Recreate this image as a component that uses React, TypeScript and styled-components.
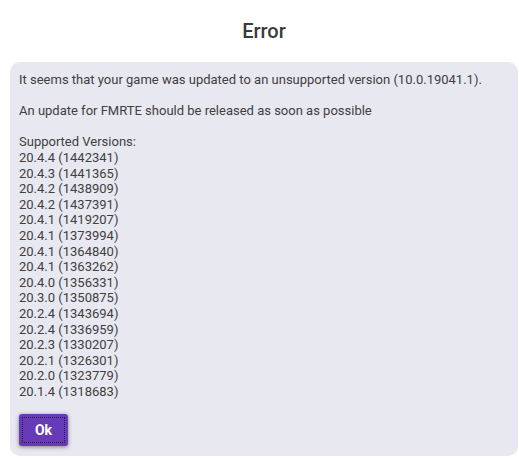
import React from "react";
import styled, { createGlobalStyle } from "styled-components";

const Global = createGlobalStyle`
  html, body { margin: 0; padding: 0; background: #ffffff; }
  body { font-family: Roboto, "Liberation Sans", sans-serif; }
`;

const Page = styled.div`
  display: flex;
  flex-direction: column;
  padding: 0 1px 4px 10px;
  width: 519px;
  box-sizing: border-box;
`;

const Title = styled.div`
  height: 62px;
  display: flex;
  align-items: center;
  justify-content: center;
  font-size: 20px;
  font-weight: 500;
  color: #3a3a3a;
`;

const Panel = styled.div`
  background: #e8e8f0;
  border-radius: 10px;
  padding: 10px 9px 10px 9px;
  display: flex;
  flex-direction: column;
  align-items: flex-start;
`;

const Message = styled.div`
  white-space: pre-wrap;
  font-size: 13px;
  line-height: 15.6px;
  color: #404040;
`;

const OkButton = styled.button`
  margin-top: 15px;
  width: 49px;
  height: 32px;
  background: #673ab7;
  color: #ffffff;
  border: none;
  border-radius: 3px;
  font-family: Roboto, "Liberation Sans", sans-serif;
  font-size: 14px;
  font-weight: 700;
  box-shadow: 0 1px 4px rgba(0, 0, 0, 0.45);
  outline: 1px dotted #2a1550;
  outline-offset: -4px;
  cursor: pointer;
`;

const versions = [
  "20.4.4 (1442341)",
  "20.4.3 (1441365)",
  "20.4.2 (1438909)",
  "20.4.2 (1437391)",
  "20.4.1 (1419207)",
  "20.4.1 (1373994)",
  "20.4.1 (1364840)",
  "20.4.1 (1363262)",
  "20.4.0 (1356331)",
  "20.3.0 (1350875)",
  "20.2.4 (1343694)",
  "20.2.4 (1336959)",
  "20.2.3 (1330207)",
  "20.2.1 (1326301)",
  "20.2.0 (1323779)",
  "20.1.4 (1318683)",
];

const text =
  "It seems that your game was updated to an unsupported version (10.0.19041.1).\n\n" +
  "An update for FMRTE should be released as soon as possible\n\n" +
  "Supported Versions:\n" +
  versions.join("\n");

export default function App() {
  return (
    <>
      <Global />
      <Page>
        <Title>Error</Title>
        <Panel>
          <Message>{text}</Message>
          <OkButton>Ok</OkButton>
        </Panel>
      </Page>
    </>
  );
}
